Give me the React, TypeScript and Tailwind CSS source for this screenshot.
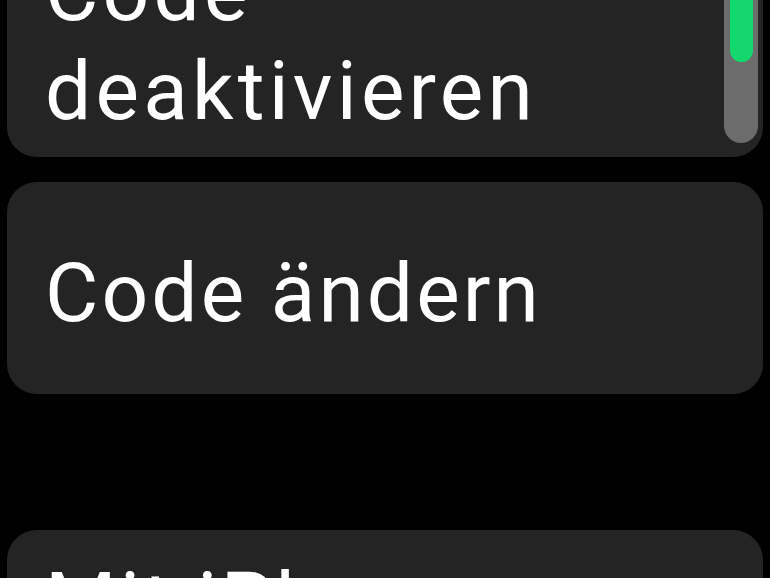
import React from "react";

export default function App() {
  const font = { fontFamily: "Roboto, 'Noto Sans', sans-serif" };
  return (
    <div className="relative h-[578px] w-[770px] overflow-hidden bg-black" style={font}>
      <div className="flex flex-col px-[7px]">
        <div className="mt-[-73px] rounded-[30px] bg-[#242424] pl-[38px] pt-[16px] pb-[16px] text-[82px] leading-[99px] tracking-[4.2px] text-white">
          Code
          <br />
          deaktivieren
        </div>
        <div className="mt-[25px] rounded-[30px] bg-[#242424] pl-[38px] pt-[62px] pb-[51px] text-[82px] leading-[99px] tracking-[3.1px] text-white">
          Code ändern
        </div>
        <div className="mt-[136px] rounded-[30px] bg-[#242424] pl-[38px] pt-[23px] pb-[40px] text-[82px] leading-[99px] tracking-[3.4px] text-white">
          Mit iPhone entsperren
        </div>
      </div>
      <div className="absolute left-[724px] top-[-60px] h-[203px] w-[34px] rounded-full bg-[#6c6c6c]">
        <div className="mx-auto h-[122px] w-[23px] rounded-full bg-[#12d86e]" />
      </div>
    </div>
  );
}
